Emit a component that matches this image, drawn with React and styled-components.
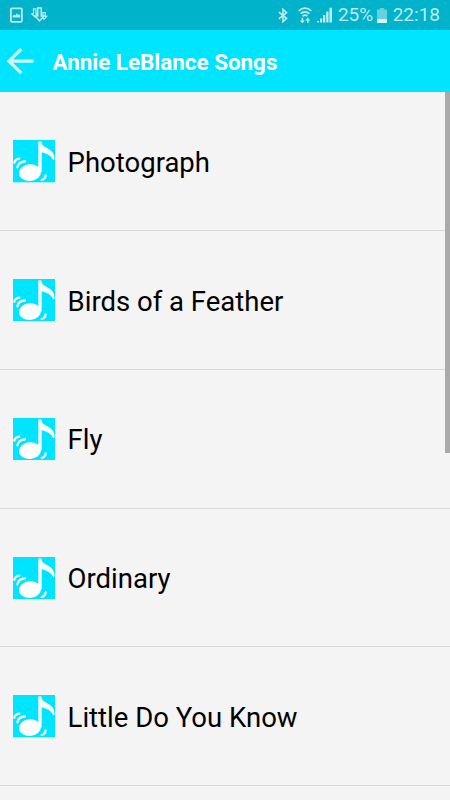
import React from 'react'
import styled, { createGlobalStyle } from 'styled-components'

const songs = ['Photograph', 'Birds of a Feather', 'Fly', 'Ordinary', 'Little Do You Know', '']

const GlobalStyle = createGlobalStyle`
  * {
    box-sizing: border-box;
  }

  body {
    margin: 0;
    font-family: Roboto, sans-serif;
    background: #f4f4f4;
  }
`

const Screen = styled.div`
  display: flex;
  flex-direction: column;
  width: 450px;
  height: 800px;
  overflow: hidden;
  background: #f4f4f4;
`

const StatusBar = styled.div`
  display: flex;
  flex: none;
  justify-content: space-between;
  height: 30px;
  padding: 0 10px 0 9px;
  background: #00b2ca;
  color: #bdebf1;
`

const StatusGroup = styled.div`
  display: flex;
  align-items: center;
`

const StatusIcon = styled.svg`
  display: block;
  flex: none;
  margin-left: ${(props) => props.$gap || 0}px;
`

const StatusText = styled.span`
  margin-left: ${(props) => props.$gap}px;
  font-size: 19px;
  line-height: 30px;
`

const AppBar = styled.header`
  display: flex;
  flex: none;
  align-items: center;
  height: 62px;
  padding-left: 6px;
  background: #00e5ff;
`

const Title = styled.h1`
  margin: 1px 0 0 18.5px;
  color: #fff;
  font-size: 22.4px;
  font-weight: bold;
  line-height: 30px;
  white-space: nowrap;
`

const Body = styled.main`
  display: flex;
  flex: 1;
  align-items: flex-start;
  min-height: 0;
  overflow: hidden;
`

const List = styled.ul`
  flex: 1;
  margin: 0 -5px 0 0;
  padding: 0.3px 0 0;
  list-style: none;
`

const Row = styled.li`
  display: flex;
  align-items: flex-start;
  height: 138.75px;
  padding: 48px 0 0 12.5px;
  border-bottom: 1px solid #d9d9d9;
`

const SongName = styled.span`
  margin: 4.7px 0 0 12.8px;
  color: #000;
  font-size: 27.5px;
  line-height: 36px;
  white-space: nowrap;
`

const ScrollThumb = styled.div`
  position: relative;
  flex: none;
  width: 5px;
  height: 361px;
  background: #aaa;
`

const NoteIcon = () => (
  <svg width="42.3" height="42.3" viewBox="0 0 127 127">
    <rect width="127" height="127" fill="#00e5ff" />
    <ellipse cx="51" cy="98" rx="33" ry="25" fill="#fff" transform="rotate(-3 51 98)" />
    <path d="M76 5q5-3 10 0v5c2 9 12 11 22 18 11 8 18 16 16 31l-3 2c-6-13-17-20-35-24v60H76z" fill="#fff" />
    <path
      d="M4 68q3-11 15-12M13 82q3-17 23-18M86 120q11-3 12-14"
      fill="none"
      stroke="#fff"
      strokeWidth="6.5"
      strokeLinecap="round"
    />
  </svg>
)

const App = () => {
  return (
    <>
      <GlobalStyle />
      <Screen>
        <StatusBar>
          <StatusGroup>
            {/* picture notification */}
            <StatusIcon width="14" height="16" viewBox="0 0 14 16">
              <rect x="1.9" y="1.4" width="11" height="13.4" rx="1" fill="none" stroke="currentColor" strokeWidth="1.8" />
              <path d="M3.6 10.6V9.2l1.5-1.7 1.2 1 1.7-2.3 1.3 1.8.9-.7 1 1.2v2.1z" fill="currentColor" />
            </StatusIcon>
            {/* downloads */}
            <StatusIcon $gap={8} width="17" height="16" viewBox="0 0 17 16">
              <path
                d="M2.5 1.9h2.4v5h1.6L3.7 9.9.8 6.9h1.7zM12 5.5h2.2v3.8h1.5l-2.7 3-2.5-3H12z"
                fill="none"
                stroke="currentColor"
                strokeWidth="1.2"
              />
              <path d="M6.7 1h3.6v8H13l-4.5 5L4 9h2.7z" fill="#12b7cd" stroke="currentColor" strokeWidth="1.5" />
            </StatusIcon>
          </StatusGroup>
          <StatusGroup>
            {/* bluetooth */}
            <StatusIcon width="10" height="15" viewBox="0 0 10 15">
              <path d="M.8 4.2l7.8 6.2-3.6 3.3V1.3l3.6 3.3L.8 10.8" fill="none" stroke="currentColor" strokeWidth="1.6" />
            </StatusIcon>
            {/* wifi with traffic arrows */}
            <StatusIcon $gap={10.5} width="14" height="17" viewBox="0 0 14 17">
              <path
                d="M.6 3.9q6.4-5.4 12.8 0M2.6 6.6q4.4-3.6 8.8 0M4.6 9.1q2.4-1.8 4.8 0"
                fill="none"
                stroke="currentColor"
                strokeWidth="1.7"
              />
              <path
                d="M5.2 10.8v2.6h1.7l-2.5 2.8-2.5-2.8h1.7v-2.6zM10.6 16v-2.6h1.7l-2.5-2.8-2.5 2.8H9V16z"
                fill="currentColor"
              />
            </StatusIcon>
            {/* signal */}
            <StatusIcon $gap={5} width="15" height="16" viewBox="0 0 15 16">
              <path d="M0 14h2v1.5H0zM3 11.5h2.2v4H3zM6 8h2.3v7.5H6zM9.2 4.5h2.3v11H9.2zM12.4.8h2.6v14.7h-2.6z" fill="currentColor" />
            </StatusIcon>
            <StatusText $gap={5.5}>25%</StatusText>
            {/* battery */}
            <StatusIcon $gap={4} width="10" height="15" viewBox="0 0 10 15">
              <path d="M0 1.5h2.8V0h4.4v1.5H10V11H0z" fill="#65d0de" />
              <path d="M0 11h10v4H0z" fill="#d9f5f8" />
            </StatusIcon>
            <StatusText $gap={5.5}>22:18</StatusText>
          </StatusGroup>
        </StatusBar>
        <AppBar>
          <svg width="28" height="28" viewBox="0 0 28 28">
            <path d="M15.3 2L3 14.2l12.3 12M3.2 14.2H27.5" fill="none" stroke="#ccfaff" strokeWidth="3.2" />
          </svg>
          <Title>Annie LeBlance Songs</Title>
        </AppBar>
        <Body>
          <List>
            {songs.map((song, i) => (
              <Row key={i}>
                <NoteIcon />
                <SongName>{song}</SongName>
              </Row>
            ))}
          </List>
          <ScrollThumb />
        </Body>
      </Screen>
    </>
  )
}

export default App
